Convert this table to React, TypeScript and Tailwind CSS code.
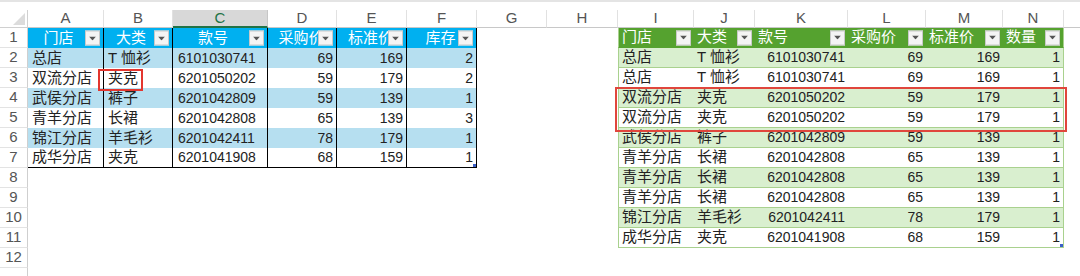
import { Fragment } from 'react'
import clsx from 'clsx'

// sheet layout: 28px row header + columns A..N
const LETTERS = ['A', 'B', 'C', 'D', 'E', 'F', 'G', 'H', 'I', 'J', 'K', 'L', 'M', 'N']
const ROWS = 13

const LEFT_HEAD = ['门店', '大类', '款号', '采购价', '标准价', '库存']
const LEFT_DATA = [
  ['总店', 'T 恤衫', '6101030741', '69', '169', '2'],
  ['双流分店', '夹克', '6201050202', '59', '179', '2'],
  ['武侯分店', '裤子', '6201042809', '59', '139', '1'],
  ['青羊分店', '长裙', '6201042808', '65', '139', '3'],
  ['锦江分店', '羊毛衫', '6201042411', '78', '179', '1'],
  ['成华分店', '夹克', '6201041908', '68', '159', '1'],
]

const RIGHT_HEAD = ['门店', '大类', '款号', '采购价', '标准价', '数量']
const RIGHT_DATA = [
  ['总店', 'T 恤衫', '6101030741', '69', '169', '1'],
  ['总店', 'T 恤衫', '6101030741', '69', '169', '1'],
  ['双流分店', '夹克', '6201050202', '59', '179', '1'],
  ['双流分店', '夹克', '6201050202', '59', '179', '1'],
  ['武侯分店', '裤子', '6201042809', '59', '139', '1'],
  ['青羊分店', '长裙', '6201042808', '65', '139', '1'],
  ['青羊分店', '长裙', '6201042808', '65', '139', '1'],
  ['青羊分店', '长裙', '6201042808', '65', '139', '1'],
  ['锦江分店', '羊毛衫', '6201042411', '78', '179', '1'],
  ['成华分店', '夹克', '6201041908', '68', '159', '1'],
]

function Dropdown() {
  return (
    <span className="absolute right-[3px] top-1/2 -translate-y-1/2 w-[15px] h-[15px] bg-[#f4f4f4] border border-[#c9c9c9] flex items-center justify-center">
      <svg width="7" height="4" viewBox="0 0 7 4">
        <polygon points="0,0 7,0 3.5,4" fill="#555" />
      </svg>
    </span>
  )
}

function Handle() {
  return <span className="absolute -right-[2px] -bottom-[2px] w-[5px] h-[5px] bg-[#3a5fc8]" />
}

function LeftCell({ r, c }: { r: number; c: number }) {
  // r: 1 = header, 2..7 = data ; c: 0..5
  const numeric = c >= 3
  const isHead = r === 1
  const banded = !isHead && r % 2 === 0
  const last = r === 7
  const text = isHead ? LEFT_HEAD[c] : LEFT_DATA[r - 2][c]
  return (
    <div
      className={clsx(
        'relative flex items-center overflow-hidden whitespace-nowrap border-r border-black',
        isHead && 'bg-[#00b0f0] text-white justify-center pr-[14px] text-[15px]',
        banded && 'bg-[#b6dff0]',
        !isHead && numeric && 'justify-end pr-[3px] text-[14px]',
        !isHead && c === 2 && 'pl-[5px] text-[14px]',
        !isHead && c < 2 && 'pl-[4px] text-[15px]',
        last && 'border-b border-b-black'
      )}
    >
      <span className={clsx(isHead && c >= 3 && 'pl-[12px]')}>{text}</span>
      {isHead && <Dropdown />}
      {last && c === 5 && <Handle />}
    </div>
  )
}

function RightCell({ r, c }: { r: number; c: number }) {
  // r: 1 = header, 2..11 = data ; c: 0..5
  const isHead = r === 1
  const banded = !isHead && r % 2 === 0
  const last = r === 11
  const text = isHead ? RIGHT_HEAD[c] : RIGHT_DATA[r - 2][c]
  return (
    <div
      className={clsx(
        'relative flex items-center overflow-hidden whitespace-nowrap border-b border-[#a9d18e]',
        isHead && 'bg-[#55a22f] text-white pl-[3px] text-[15px] border-b-[#55a22f]',
        banded && 'bg-[#d9efcf]',
        !isHead && c >= 2 && 'justify-end pr-[3px] text-[14px]',
        !isHead && c < 2 && 'pl-[3px] text-[15px]',
        c === 0 && 'border-l border-l-[#a9d18e]',
        c === 5 && 'border-r border-r-[#a9d18e]'
      )}
    >
      <span>{text}</span>
      {isHead && <Dropdown />}
      {last && c === 5 && <Handle />}
    </div>
  )
}

function Cell({ r, c }: { r: number; c: number }) {
  if (c <= 5 && r <= 7) return <LeftCell r={r} c={c} />
  if (c >= 8 && r <= 11) return <RightCell r={r} c={c - 8} />
  return <div />
}

export default function App() {
  const rows = Array.from({ length: ROWS }, (_, i) => i + 1)
  return (
    <div className="relative w-[1080px] h-[276px] overflow-hidden bg-white text-[#222] font-['Liberation_Sans','Noto_Sans_CJK_SC',sans-serif]">
      {/* top strip */}
      <div className="h-[10px] border-t-2 border-[#e4e4e4]" />

      <div className="grid grid-cols-[28px_76px_69px_95px_69px_70px_70px_70px_71px_76px_61px_93px_78px_77px_61px_1fr] grid-rows-[18px_repeat(13,20px)]">
        {/* corner */}
        <div className="relative bg-white border-r border-b border-[#d0d0d0]">
          <svg className="absolute right-[2px] bottom-[2px]" width="12" height="12" viewBox="0 0 12 12">
            <polygon points="12,0 12,12 0,12" fill="#dcdcdc" />
          </svg>
        </div>
        {LETTERS.map(l => (
          <div
            key={l}
            className={clsx(
              'flex items-center justify-center text-[15px] border-r',
              l === 'C'
                ? 'bg-[#d8d8d8] text-[#217346] border-[#c6c6c6] border-b-2 border-b-[#217346]'
                : 'bg-white text-[#555] border-[#e1e1e1] border-b border-b-[#c8c8c8]'
            )}
          >
            {l}
          </div>
        ))}
        <div className="border-b border-[#c8c8c8]" />

        {rows.map(r => (
          <Fragment key={r}>
            <div className="flex items-center justify-center text-[15px] text-[#555] border-r border-b border-r-[#cfcfcf] border-b-[#e3e3e3]">
              {r <= 12 ? r : ''}
            </div>
            {LETTERS.map((_, c) => (
              <Cell key={c} r={r} c={c} />
            ))}
            <div />
          </Fragment>
        ))}
      </div>

      {/* selection highlights */}
      <div className="absolute left-[98px] top-[69px] w-[45px] h-[22px] border-2 border-[#e3362f]" />
      <div className="absolute left-[615px] top-[87px] w-[452px] h-[45px] border-[2.5px] border-[#e0463c]" />
    </div>
  )
}
